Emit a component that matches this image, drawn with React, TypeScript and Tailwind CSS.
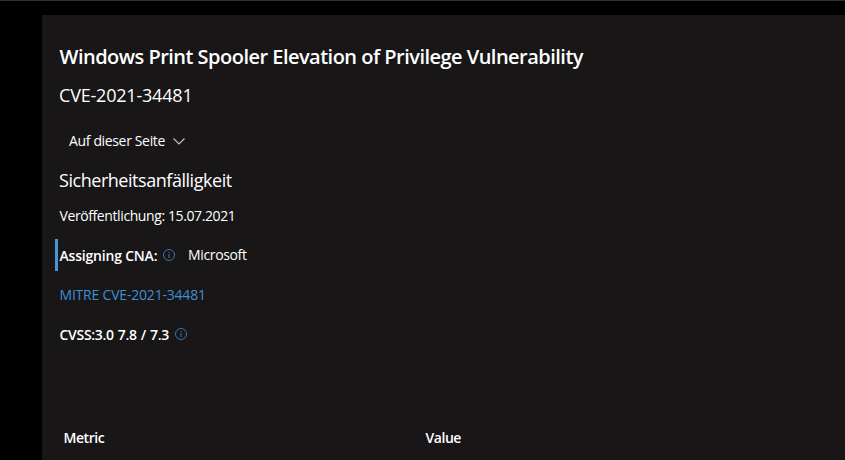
import { clsx } from "clsx"

// ============================================
// Icons
// ============================================

function ChevronDownIcon() {
  return (
    <svg width="12" height="7" viewBox="0 0 12 7" fill="none" aria-hidden="true">
      <path d="M0.5 0.5L6 6L11.5 0.5" stroke="#c8c6c4" strokeWidth="1.1" />
    </svg>
  )
}

function InfoIcon() {
  return (
    <svg width="12" height="12" viewBox="0 0 12 12" fill="none" aria-hidden="true">
      <circle cx="6" cy="6" r="5.5" stroke="#3a76b0" strokeWidth="1" />
      <path d="M6 5V9M6 3V4" stroke="#3a76b0" strokeWidth="1" />
    </svg>
  )
}

// ============================================
// Sub-components
// ============================================

interface InfoButtonProps {
  label: string
  className?: string
}

function InfoButton({ label, className }: InfoButtonProps) {
  return (
    <button type="button" aria-label={label} className={clsx("shrink-0", className)}>
      <InfoIcon />
    </button>
  )
}

// ============================================
// Main Component
// ============================================

export default function App() {
  return (
    <div className="h-[460px] overflow-hidden border-t border-[#2f3130] bg-black pt-3.5 pl-[42px] font-['Open_Sans',sans-serif] text-sm text-white">
      <main className="flex h-full flex-col items-start bg-[#181617] pt-7 pl-[13px] whitespace-nowrap">
        <h1 className="pl-[4.5px] text-xl leading-7 font-semibold tracking-[-0.52px]">
          Windows Print Spooler Elevation of Privilege Vulnerability
        </h1>
        <p className="mt-3 pl-1 text-lg leading-6 tracking-[-0.2px]">CVE-2021-34481</p>

        <button type="button" className="mt-6 flex h-5 items-center gap-2 pl-3.5 leading-5 tracking-[-0.35px]">
          Auf dieser Seite
          <ChevronDownIcon />
        </button>

        <h2 className="mt-[17px] pl-1 text-lg leading-6 tracking-[-0.46px]">Sicherheitsanfälligkeit</h2>
        <p className="mt-3.5 pl-[4.5px] leading-5 tracking-[-0.4px]">Veröffentlichung: 15.07.2021</p>

        {/* Assigning authority */}
        <div className="mt-[13px] flex h-8 items-center border-l-3 border-[#4297d7] pl-[1.5px]">
          <span className="w-[98px] pt-0.5 font-semibold tracking-[-0.2px]">Assigning CNA:</span>
          <InfoButton label="Assigning CNA" className="ml-[5.5px]" />
          <span className="ml-[13px] tracking-[-0.35px]">Microsoft</span>
        </div>

        <a href="#mitre" className="mt-3.5 pl-[4.5px] leading-5 tracking-[-0.2px] text-[#3f8fd4]">
          MITRE CVE-2021-34481
        </a>

        {/* Score */}
        <div className="mt-5 flex h-5 items-center pl-[4.5px]">
          <span className="w-[110px] font-semibold tracking-[-0.3px] [word-spacing:0.7px]">CVSS:3.0 7.8 / 7.3</span>
          <InfoButton label="CVSS" className="mb-0.5 ml-[5.5px]" />
        </div>

        <div className="mt-[83px] flex pl-[8.5px] leading-5 font-semibold tracking-[-0.45px]">
          <span className="w-[362px]">Metric</span>
          <span>Value</span>
        </div>
      </main>
    </div>
  )
}
